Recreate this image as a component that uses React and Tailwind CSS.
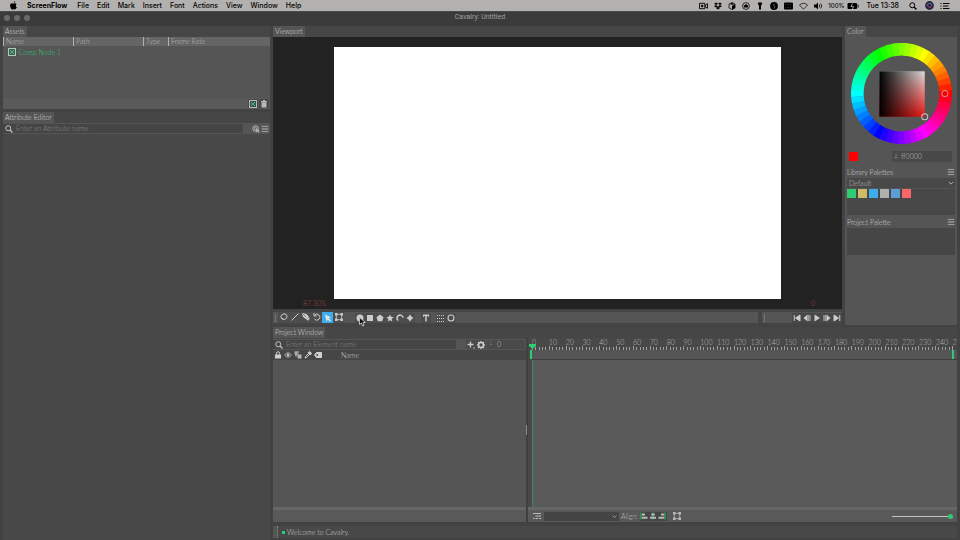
import React, { useState } from 'react';

const MENUS = ['File', 'Edit', 'Mark', 'Insert', 'Font', 'Actions', 'View', 'Window', 'Help'];
const PALETTE = ['#2ecc71', '#cdbb67', '#3daee9', '#b0b0ac', '#5b9fd6', '#fa6569'];
const FRAMES = 252.5;

function Svg({ children, className = 'w-2 h-2', viewBox = '0 0 16 16' }) {
  return (
    <svg
      viewBox={viewBox}
      className={`shrink-0 ${className}`}
      fill="none"
      stroke="currentColor"
      strokeWidth="2"
      aria-hidden="true"
    >
      {children}
    </svg>
  );
}

const icons = {
  search: <><circle cx="6.5" cy="6.5" r="5" /><path d="M10 10l5 5" strokeWidth="2.6" /></>,
  menu: <path d="M1 3h14M1 8h14M1 13h14" strokeWidth="3" />,
  comp: <><rect x="1" y="1" width="14" height="14" /><path d="M4 4l8 8M12 4l-8 8" stroke="#2ecc8a" strokeWidth="2" /></>,
  trash: <><path d="M3 4.5h10V13q0 2-2 2H5q-2 0-2-2z" fill="currentColor" stroke="none" /><path d="M2 3h12M6 1h4" strokeWidth="2" /></>,
  pick: <><circle cx="7" cy="7" r="5.5" /><circle cx="7" cy="7" r="2" /><path d="M8 8l7 2.5-2.5 1.3 2.500 2.600-1.600 1.200-2.300-2.500L9.300 15z" fill="currentColor" strokeWidth="0.5" /></>,
  lasso: <path d="M6 14v-3H3L1.500 6.500 5 2.500l5-.8 4 3.300-.5 4.500-4 3.500H6" />,
  line: <path d="M1 15L15 1" />,
  pen: <><path d="M1 1l8 2 4 5-4 4-6-4z" fill="currentColor" /><path d="M9 13l4-4 2.500 2.500-4 4z" fill="currentColor" stroke="none" /><path d="M1 1l7 7" stroke="#4d4d4d" strokeWidth="1.200" /></>,
  rotate: <><path d="M3 4.500A6 6 0 1 1 3 12" /><path d="M2 0v6h5.500" /></>,
  arrow: <path d="M2 1l12 5.500L9.500 8.500l4.500 4.500-2.500 2L7.500 11 5 15z" fill="currentColor" stroke="none" />,
  transform: <><rect x="2.500" y="2.500" width="11" height="11" strokeWidth="1.600" /><path d="M0 0h5v5H0zM11 0h5v5h-5zM0 11h5v5H0zM11 11h5v5h-5z" fill="currentColor" stroke="none" /></>,
  circle: <circle cx="8" cy="8" r="7" fill="currentColor" stroke="none" />,
  square: <rect x="2" y="2" width="12" height="12" fill="currentColor" stroke="none" />,
  pentagon: <path d="M8 1l7 5.300L12.400 14.500H3.600L1 6.300z" fill="currentColor" stroke="none" />,
  star: <path d="M8 1l2.200 4.700 5.100.6-3.800 3.500 1 5.100L8 12.400l-4.500 2.500 1-5.100L.7 6.300l5.100-.6z" fill="currentColor" stroke="none" />,
  arc: <path d="M4.500 13A6 6 0 1 1 14 7.500" strokeWidth="3" />,
  spark: <path d="M8 1l2.800 4.200L15 8l-4.200 2.800L8 15l-2.800-4.200L1 8l4.200-2.800z" fill="currentColor" stroke="none" />,
  text: <><path d="M2 2.500h12M8 2v13" strokeWidth="3" /><path d="M3 2v4M13 2v4" strokeWidth="1.500" /></>,
  dots: <path d="M0 3h16M0 9h16M0 15h16" strokeWidth="2" strokeDasharray="2 2" />,
  ring: <circle cx="8" cy="8" r="6" strokeWidth="2.200" />,
  lock: <><rect x="2" y="7" width="12" height="8" fill="currentColor" stroke="none" /><path d="M5 7V4.500a3 3 0 0 1 6 0V7" /></>,
  eye: <><path d="M1 8q7-9 14 0-7 9-14 0z" strokeWidth="1.400" /><circle cx="8" cy="8" r="2" fill="currentColor" /></>,
  tree: <><path d="M1 2h9M1 6h8M4 2v9" /><path d="M7 7h8v8H7z" fill="currentColor" stroke="none" opacity="0.8" /></>,
  dropper: <><path d="M2 14l1-3 6-6 2 2-6 6z" /><path d="M8 3.500L12.500 8 15 4.500 11.500 1z" fill="currentColor" /></>,
  tag: <><path d="M1 8l4-5h10v10H5z" fill="currentColor" /><circle cx="6.500" cy="8" r="1.800" fill="#444" stroke="none" /></>,
  plus: <><path d="M7 1v12M1 7h12" strokeWidth="2.600" /><path d="M12.500 14h3" /></>,
  gear: <><circle cx="8" cy="8" r="4.800" strokeWidth="3" /><path d="M8 0v3M8 13v3M0 8h3M13 8h3M2 2l2.500 2.500M11.500 11.500l2.500 2.500M2 14l2.500-2.500M11.500 4.500L14 2" strokeWidth="2.600" /></>,
  first: <path d="M2.500 2v12M14 2v12L5 8z" fill="currentColor" />,
  prev: <><path d="M1 8l8-7v14z" fill="currentColor" stroke="none" /><path d="M10.500 2v12M14 2v12" strokeWidth="1.800" /></>,
  play: <path d="M3 1l11 7-11 7z" fill="currentColor" stroke="none" />,
  next: <><path d="M15 8L7 1v14z" fill="currentColor" stroke="none" /><path d="M2 2v12M5.500 2v12" strokeWidth="1.800" /></>,
  last: <path d="M13.500 2v12M2 2v12l9-6z" fill="currentColor" />,
  chevron: <path d="M2 5l6 6 6-6" strokeWidth="2.400" />,
  layers: <path d="M0 3h16M5 8h11M0 13h3M5 13h5M12 13h4" strokeWidth="2.200" />,
  alignLeft: <><path d="M2 1v14" stroke="#2ecc71" /><path d="M4 5h6M4 11.500h11" strokeWidth="4" /></>,
  alignCenter: <><path d="M8 1v14" stroke="#2ecc71" /><path d="M4.500 5h7M2 11.500h12" strokeWidth="4" /></>,
  alignRight: <><path d="M14 1v14" stroke="#2ecc71" /><path d="M6 5h6M1 11.500h11" strokeWidth="4" /></>,
};

function IconButton({ icon, label, className = '' }) {
  return (
    <button type="button" aria-label={label} className={`flex items-center justify-center shrink-0 ${className}`}>
      <Svg>{icons[icon]}</Svg>
    </button>
  );
}

function Tab({ children }) {
  return (
    <div className="flex h-[11px] shrink-0 bg-[#464646]">
      <button type="button" className="bg-[#555555] px-0.5 text-[#d8d8d8]">{children}</button>
    </div>
  );
}

function MenuBar() {
  return (
    <header className="flex h-[11px] shrink-0 items-center bg-[#b3b1af] pl-[9px] pr-2.5 text-black font-['Inter','Liberation_Sans',sans-serif] text-[7px] font-medium">
      <button type="button" aria-label="Apple" className="mr-[9px]">
        <Svg className="h-[9px] w-[9px]">
          <path d="M11 0Q8.500.6 8.300 3.500 11 3.300 11 0zM8 4.800Q4.500 2.800 2.600 5.500 1 8 3 12.300 4.500 15.500 6 15.300L8 14.600l2.200.7Q12.500 15 14 11.300 10.500 9 13.400 5.400 11.500 3 8 4.800z" fill="currentColor" stroke="none" />
        </Svg>
      </button>
      <button type="button" className="mr-2.5 font-bold">ScreenFlow</button>
      <nav className="flex flex-1 gap-2">
        {MENUS.map((m) => <button type="button" key={m}>{m}</button>)}
      </nav>
      <div className="flex items-center gap-1.5">
        <Svg className="h-2 w-[9px]" viewBox="0 0 20 16"><path d="M1 2h12v12H1zM14 6l5-3v10l-5-3z" /><circle cx="7" cy="8" r="2" fill="currentColor" /></Svg>
        <Svg><path d="M4.500 1L8 3.500 4 6 0 3.500zM11.500 1L16 3.500 12 6 8 3.500zM4 6l4 2.500L4.500 11 0 8.500zM12 6l4 2.500-4.500 2.500L8 8.500zM4 12l4-2.500 4 2.500-4 3z" fill="currentColor" stroke="none" /></Svg>
        <Svg><path d="M8 1l6 3v8l-6 3-6-3V4z" strokeWidth="1.500" /><path d="M8 8l6-4v8l-6 3zM4 4l4-2 4 2-4 2z" fill="currentColor" stroke="none" /></Svg>
        <Svg><circle cx="8" cy="8" r="6.800" strokeWidth="1.500" /><path d="M3.500 11l1-4L8 4l3.500 3 1 4z" fill="currentColor" stroke="none" /></Svg>
        <Svg><path d="M4 1h8v4l-2 2v8H6V7L4 5z" fill="currentColor" stroke="none" /></Svg>
        <Svg><circle cx="8" cy="8" r="7.800" fill="currentColor" stroke="none" /><path d="M9 3L7 7l3 2-2 4" stroke="#777" strokeWidth="1.400" /></Svg>
        <Svg className="h-2 w-[9px]" viewBox="0 0 18 16"><rect x="0" y="1" width="18" height="14" rx="2" fill="currentColor" stroke="none" /><path d="M3 5h12M3 11h12" stroke="#666" strokeWidth="1.400" strokeDasharray="1 2" /></Svg>
        <Svg className="h-2 w-[9px]" viewBox="0 0 20 16"><path d="M1 6q9-8 18 0l-9 9z" strokeWidth="1.600" /></Svg>
        <Svg className="h-2 w-[9px]" viewBox="0 0 18 16"><path d="M0 5h4l4-4v14l-4-4H0z" fill="currentColor" stroke="none" /><path d="M10.500 5q2 3 0 6M13.500 3q4 5 0 10" strokeWidth="1.600" /></Svg>
        <span className="-ml-px text-[6px]">100%</span>
        <Svg className="-ml-1 h-2 w-3" viewBox="0 0 24 16"><rect x="1" y="2" width="19" height="12" rx="2" fill="currentColor" stroke="none" /><path d="M22 5v6" /><path d="M11 3L8 9h5l-2 5" stroke="#bbb" strokeWidth="1.600" /></Svg>
        <span className="ml-0.5">Tue 13:38</span>
        <Svg className="ml-1 h-2 w-2">{icons.search}</Svg>
        <Svg className="ml-0.5 h-[9px] w-[9px]"><circle cx="8" cy="8" r="7.800" fill="#29223c" stroke="none" /><path d="M3 8q5-7 10-1" stroke="#5b94d6" strokeWidth="1.600" /><path d="M4 8q5 7 8 0" stroke="#b64f8c" strokeWidth="1.600" /></Svg>
        <Svg className="h-2 w-2.5" viewBox="0 0 20 16"><path d="M1 3h2M6 3h13M1 8h2M6 8h11M1 13h2M6 13h13" /></Svg>
      </div>
    </header>
  );
}

function AssetsPanel() {
  return (
    <section className="flex h-[83px] shrink-0 flex-col">
      <Tab>Assets</Tab>
      <div className="flex flex-1 flex-col bg-[#555555]">
        <table className="w-full table-fixed border-collapse text-left">
          <colgroup>
            <col className="w-[70px]" />
            <col className="w-[70px]" />
            <col className="w-[25px]" />
            <col />
          </colgroup>
          <thead>
            <tr className="h-[9px] bg-[#656565] leading-[9px] text-[#bcbcbc]">
              {['Name', 'Path', 'Type', 'Frame Rate'].map((h) => (
                <th key={h} className="border-l border-[#b0b0b0] p-0 pl-[2px] font-light">{h}</th>
              ))}
            </tr>
          </thead>
          <tbody>
            <tr className="h-3 text-[#2ecc71]">
              <td className="p-0 pl-1" colSpan={4}>
                <div className="flex items-center gap-[3px]">
                  <Svg className="h-2 w-2 text-[#a8cdbb]">{icons.comp}</Svg>Comp Node 1
                </div>
              </td>
            </tr>
          </tbody>
        </table>
        <div className="mt-auto flex h-[11px] items-center justify-end gap-px bg-[#5a5a5a] pr-px text-[#b9b9b9]">
          <IconButton icon="comp" label="New composition" className="h-[9px] w-2.5 bg-[#484848]" />
          <IconButton icon="trash" label="Delete asset" className="h-[9px] w-2.5 bg-[#484848]" />
        </div>
      </div>
    </section>
  );
}

function AttributeEditor() {
  return (
    <section className="flex flex-1 flex-col">
      <Tab>Attribute Editor</Tab>
      <div className="flex h-[11px] items-center bg-[#555555] pr-px">
        <label className="flex h-[9px] flex-1 items-center gap-[3px] bg-[#454545] pl-0.5 text-[#c4c4c4]">
          <Svg>{icons.search}</Svg>
          <input aria-label="Attribute name" placeholder="Enter an Attribute name" className="w-full bg-transparent outline-none placeholder:text-[#888888]" />
        </label>
        <IconButton icon="pick" label="Pick attribute" className="ml-[9px] text-[#b9b9b9]" />
        <IconButton icon="menu" label="Attribute menu" className="ml-px bg-[#484848] text-[#999999]" />
      </div>
      <div className="flex-1 bg-[#484848]" />
    </section>
  );
}

function Viewport() {
  return (
    <section className="flex flex-1 flex-col">
      <Tab>Viewport</Tab>
      <div className="flex flex-1 flex-col bg-[#222222] px-[61px] pt-2.5">
        <div className="flex-1 bg-white" />
        <div className="-mx-[34px] flex h-2.5 justify-between pl-[3px] leading-[8px] text-[#a04848]">
          <span>87.30%</span>
          <span>0</span>
        </div>
      </div>
    </section>
  );
}

function Toolbar() {
  return (
    <div className="mt-px flex h-[15px] shrink-0 gap-1 bg-[#444444] py-0.5 text-[#cccccc]">
      <div className="flex flex-1 items-center bg-[#555555] pl-0.5">
        <span className="mr-0.5 h-2 w-px bg-[#777777]" />
        <div className="flex bg-[#4d4d4d]">
          {['lasso', 'line', 'pen', 'rotate'].map((n) => <IconButton key={n} icon={n} label={n} className="h-2.5 w-[11px]" />)}
          <IconButton icon="arrow" label="select" className="h-[11px] w-[11px] bg-[#3daee9] text-[#e5e5e5]" />
          <IconButton icon="transform" label="transform" className="h-2.5 w-[11px]" />
        </div>
        <div className="relative ml-[11px] flex bg-[#4d4d4d]">
          {['circle', 'square', 'pentagon', 'star', 'arc', 'spark'].map((n) => <IconButton key={n} icon={n} label={n} className="h-2.5 w-2.5" />)}
          {/* mouse pointer */}
          <Svg className="absolute left-1 top-1 h-2.5 w-[7px]" viewBox="0 0 14 20">
            <path d="M1 1v14l4-3 2 6 3-1-2-6h5z" fill="#111" stroke="#bbb" />
          </Svg>
        </div>
        <IconButton icon="text" label="text" className="ml-1.5 h-2.5 w-2.5 bg-[#4d4d4d]" />
        <div className="ml-[5px] flex bg-[#4d4d4d]">
          <IconButton icon="dots" label="grid" className="h-2.5 w-2.5" />
          <IconButton icon="ring" label="ring" className="h-2.5 w-2.5" />
        </div>
      </div>
      <div className="flex w-[80px] items-center bg-[#555555] pl-0.5">
        <span className="mr-auto h-2 w-px bg-[#777777]" />
        {['first', 'prev', 'play', 'next', 'last'].map((n) => (
          <IconButton key={n} icon={n} label={n} className="h-2.5 w-2.5 bg-[#484848]" />
        ))}
      </div>
    </div>
  );
}

function ColorWheel() {
  const steps = 48;
  const point = (i, r) => {
    const a = ((i - 0.5) / steps) * Math.PI * 2;
    return `${50 + r * Math.cos(a)} ${50 - r * Math.sin(a)}`;
  };
  return (
    <svg viewBox="0 0 100 100" className="mx-auto mt-1.5 w-[101px]" role="img" aria-label="Colour wheel">
      <defs>
        <linearGradient id="sat" x1="0" y1="0" x2="0" y2="1">
          <stop offset="0" stopColor="#e0dede" />
          <stop offset="1" stopColor="#ef1515" />
        </linearGradient>
        <linearGradient id="val">
          <stop offset="0" stopColor="#000" />
          <stop offset="1" stopColor="#000" stopOpacity="0" />
        </linearGradient>
      </defs>
      {Array.from({ length: steps }, (_, i) => (
        <path
          key={i}
          d={`M${point(i, 50)}A50 50 0 0 0 ${point(i + 1.08, 50)}L${point(i + 1.08, 37.5)}A37.500 37.500 0 0 1 ${point(i, 37.5)}z`}
          fill={`hsl(${(i * 360) / steps} 100% 50%)`}
        />
      ))}
      <rect x="28" y="28" width="45" height="45" fill="url(#sat)" />
      <rect x="28" y="28" width="45" height="45" fill="url(#val)" />
      <circle cx="93" cy="50" r="3" fill="none" stroke="#d09090" />
      <circle cx="73" cy="73" r="3" fill="none" stroke="#c9c9c9" />
    </svg>
  );
}

function ColorPanel() {
  const [hex, setHex] = useState('ff0000');
  return (
    <section className="flex w-[112px] shrink-0 flex-col">
      <Tab>Color</Tab>
      <div className="flex flex-1 flex-col bg-[#555555] px-0.5">
        <ColorWheel />
        <div className="mt-[7px] flex h-[11px] items-center justify-between pl-0.5 pr-[3px]">
          <span className="size-[9px] bg-[#ff0000]" />
          <label className="flex h-[11px] w-[60px] items-center gap-[3px] bg-[#484848] pl-0.5 text-[#888888]">
            #
            <input aria-label="Hex colour" value={hex} onChange={(e) => setHex(e.target.value)} className="w-full bg-transparent text-[#c0c0c0] outline-none" />
          </label>
        </div>
        <div className="mt-[5px] flex h-2.5 items-center justify-between text-[#d8d8d8]">
          <h2>Library Palettes</h2>
          <IconButton icon="menu" label="Library menu" className="bg-[#444444] text-[#999999]" />
        </div>
        <div className="mt-px flex h-2.5 items-center bg-[#484848] text-[#c0c0c0]">
          <select aria-label="Library palette" className="w-full appearance-none bg-transparent pl-0.5 outline-none">
            <option>Default</option>
          </select>
          <Svg className="mr-px h-[6px] w-[6px]">{icons.chevron}</Svg>
        </div>
        <div className="mt-px flex h-[26px] gap-0.5 bg-[#484848]">
          {PALETTE.map((c) => (
            <button type="button" key={c} aria-label={c} className="h-[9px] w-[9px]" style={{ backgroundColor: c }} />
          ))}
        </div>
        <div className="mt-0.5 flex h-2.5 items-center justify-between text-[#d8d8d8]">
          <h2>Project Palette</h2>
          <IconButton icon="menu" label="Project menu" className="bg-[#444444] text-[#999999]" />
        </div>
        <div className="mt-px h-[27px] bg-[#464646]" />
      </div>
    </section>
  );
}

function ElementList() {
  return (
    <div className="flex w-[253px] shrink-0 flex-col pt-px">
      <div className="flex h-[11px] items-center bg-[#555555]">
        <label className="flex h-[9px] flex-1 items-center gap-[3px] bg-[#454545] pl-0.5 text-[#c4c4c4]">
          <Svg>{icons.search}</Svg>
          <input aria-label="Element name" placeholder="Enter an Element name" className="w-full bg-transparent outline-none placeholder:text-[#888888]" />
        </label>
        <div className="ml-2.5 flex text-[#cccccc]">
          <IconButton icon="plus" label="Add" className="h-[9px] w-2.5 bg-[#4a4a4a]" />
          <IconButton icon="gear" label="Settings" className="h-[9px] w-2.5 bg-[#4a4a4a]" />
        </div>
        <label className="ml-px mr-px flex h-[9px] w-[38px] items-center gap-1 bg-[#4a4a4a] pl-0.5 text-[#777777]">
          F
          <input aria-label="Frame" defaultValue="0" className="w-full bg-transparent text-[#c0c0c0] outline-none" />
        </label>
      </div>
      <div className="flex h-2.5 items-center gap-0.5 bg-[#464646] pl-px text-[#d0d0d0]">
        {['lock', 'eye', 'tree', 'dropper', 'tag'].map((n) => <IconButton key={n} icon={n} label={n} />)}
        <span className="ml-[17px]">Name</span>
      </div>
      <div className="flex-1 bg-[#555555]" />
      <div className="h-[3px] bg-[#666666]" />
      <div className="h-3 bg-[#595959]" />
    </div>
  );
}

function Timeline() {
  return (
    <div className="relative flex min-w-0 flex-1 flex-col pl-1">
      <div className="flex h-2 overflow-hidden text-[#b8b8b8]">
        {Array.from({ length: 26 }, (_, i) => (
          <span key={i} className="shrink-0 leading-[8px]" style={{ width: `${(10 / FRAMES) * 100}%` }}>{i * 10}</span>
        ))}
      </div>
      <div className="flex h-1 items-end overflow-hidden">
        {Array.from({ length: 126 }, (_, i) => (
          <span
            key={i}
            className={`shrink-0 border-l border-[#a0a0a0] ${i % 5 === 0 ? 'h-1' : 'h-[3px]'}`}
            style={{ width: `${(2 / FRAMES) * 100}%` }}
          />
        ))}
      </div>
      <div className="-ml-0.5 flex h-[9px] justify-between bg-[#555555] pr-[3px]">
        <span className="w-0.5 bg-[#2ecc71]" />
        <span className="w-0.5 bg-[#2ecc71]" />
      </div>
      <div className="h-px bg-[#3d3d3d]" />
      <div className="flex-1 border-l border-[#3f8a60] bg-[#5a5a5a]" />
      {/* playhead marker */}
      <Svg className="absolute left-px top-1.5 h-[5px] w-[7px] text-[#2ecc71]" viewBox="0 0 14 10">
        <path d="M0 0h14v4L7 10 0 4z" fill="currentColor" stroke="none" />
      </Svg>
      <div className="-ml-1 h-[3px] bg-[#666666]" />
      <div className="-ml-1 flex h-3 items-center bg-[#595959] pl-[5px] text-[#b9b9b9]">
        <IconButton icon="layers" label="Layers" />
        <div className="ml-[3px] flex h-[9px] w-[75px] items-center bg-[#444444]">
          <select aria-label="Layer mode" className="w-full appearance-none bg-transparent outline-none" />
          <Svg className="mr-0.5 h-[5px] w-[5px]">{icons.chevron}</Svg>
        </div>
        <span className="ml-0.5 text-[#b8b8b8]">Align:</span>
        <div className="ml-0.5 flex bg-[#464646]">
          {['alignLeft', 'alignCenter', 'alignRight'].map((n) => <IconButton key={n} icon={n} label={n} className="h-[9px] w-[9px]" />)}
        </div>
        <IconButton icon="transform" label="Fit" className="ml-1.5" />
        <input
          type="range"
          aria-label="Zoom"
          defaultValue="100"
          className="ml-auto mr-1 h-[5px] w-[61px] appearance-none bg-transparent [&::-webkit-slider-runnable-track]:h-px [&::-webkit-slider-runnable-track]:bg-[#c4c4c4] [&::-webkit-slider-thumb]:-mt-0.5 [&::-webkit-slider-thumb]:size-[5px] [&::-webkit-slider-thumb]:appearance-none [&::-webkit-slider-thumb]:rounded-full [&::-webkit-slider-thumb]:bg-[#2ecc71]"
        />
      </div>
    </div>
  );
}

export default function App() {
  return (
    <div className="flex h-screen flex-col overflow-hidden bg-[#424242] font-['Lato','Liberation_Sans',sans-serif] text-[7px] font-light leading-[9px]">
      <MenuBar />
      <div className="flex h-[15px] shrink-0 items-center border-t border-[#4a4a4a] bg-[#3b3b3b] pb-[3px] pl-1">
        <div className="flex flex-1 gap-1">
          {['Close', 'Minimise', 'Zoom'].map((n) => (
            <button type="button" key={n} aria-label={n} className="size-[6px] rounded-full bg-[#6a6a6a]" />
          ))}
        </div>
        <h1 className="mr-1 font-['Roboto','Liberation_Sans',sans-serif] font-normal text-[#a0a0a0]">Cavalry: Untitled</h1>
        <div className="flex-1" />
      </div>
      <main className="flex min-h-0 flex-1 gap-[3px] px-[3px]">
        <div className="flex w-[267px] shrink-0 flex-col gap-[3px]">
          <AssetsPanel />
          <AttributeEditor />
        </div>
        <div className="flex min-w-0 flex-1 flex-col">
          <div className="flex h-[299px] shrink-0 gap-[3px]">
            <div className="flex min-w-0 flex-1 flex-col">
              <Viewport />
              <Toolbar />
            </div>
            <ColorPanel />
          </div>
          <section className="mt-0.5 flex flex-1 flex-col">
            <Tab>Project Window</Tab>
            <div className="flex flex-1 bg-[#484848]">
              <ElementList />
              <div className="flex w-0.5 items-center bg-[#404040]">
                <span className="h-2.5 w-px bg-[#888888]" />
              </div>
              <Timeline />
            </div>
          </section>
          <footer className="mb-0.5 mt-1 flex h-3 shrink-0 items-center bg-[#484848] text-[#d0d0d0]">
            <span className="mr-1 h-full w-[5px] border-r border-dotted border-[#888888] bg-[#555555]" />
            <span className="mr-0.5 size-[3px] bg-[#2ecc71]" />
            Welcome to Cavalry.
          </footer>
        </div>
      </main>
    </div>
  );
}
